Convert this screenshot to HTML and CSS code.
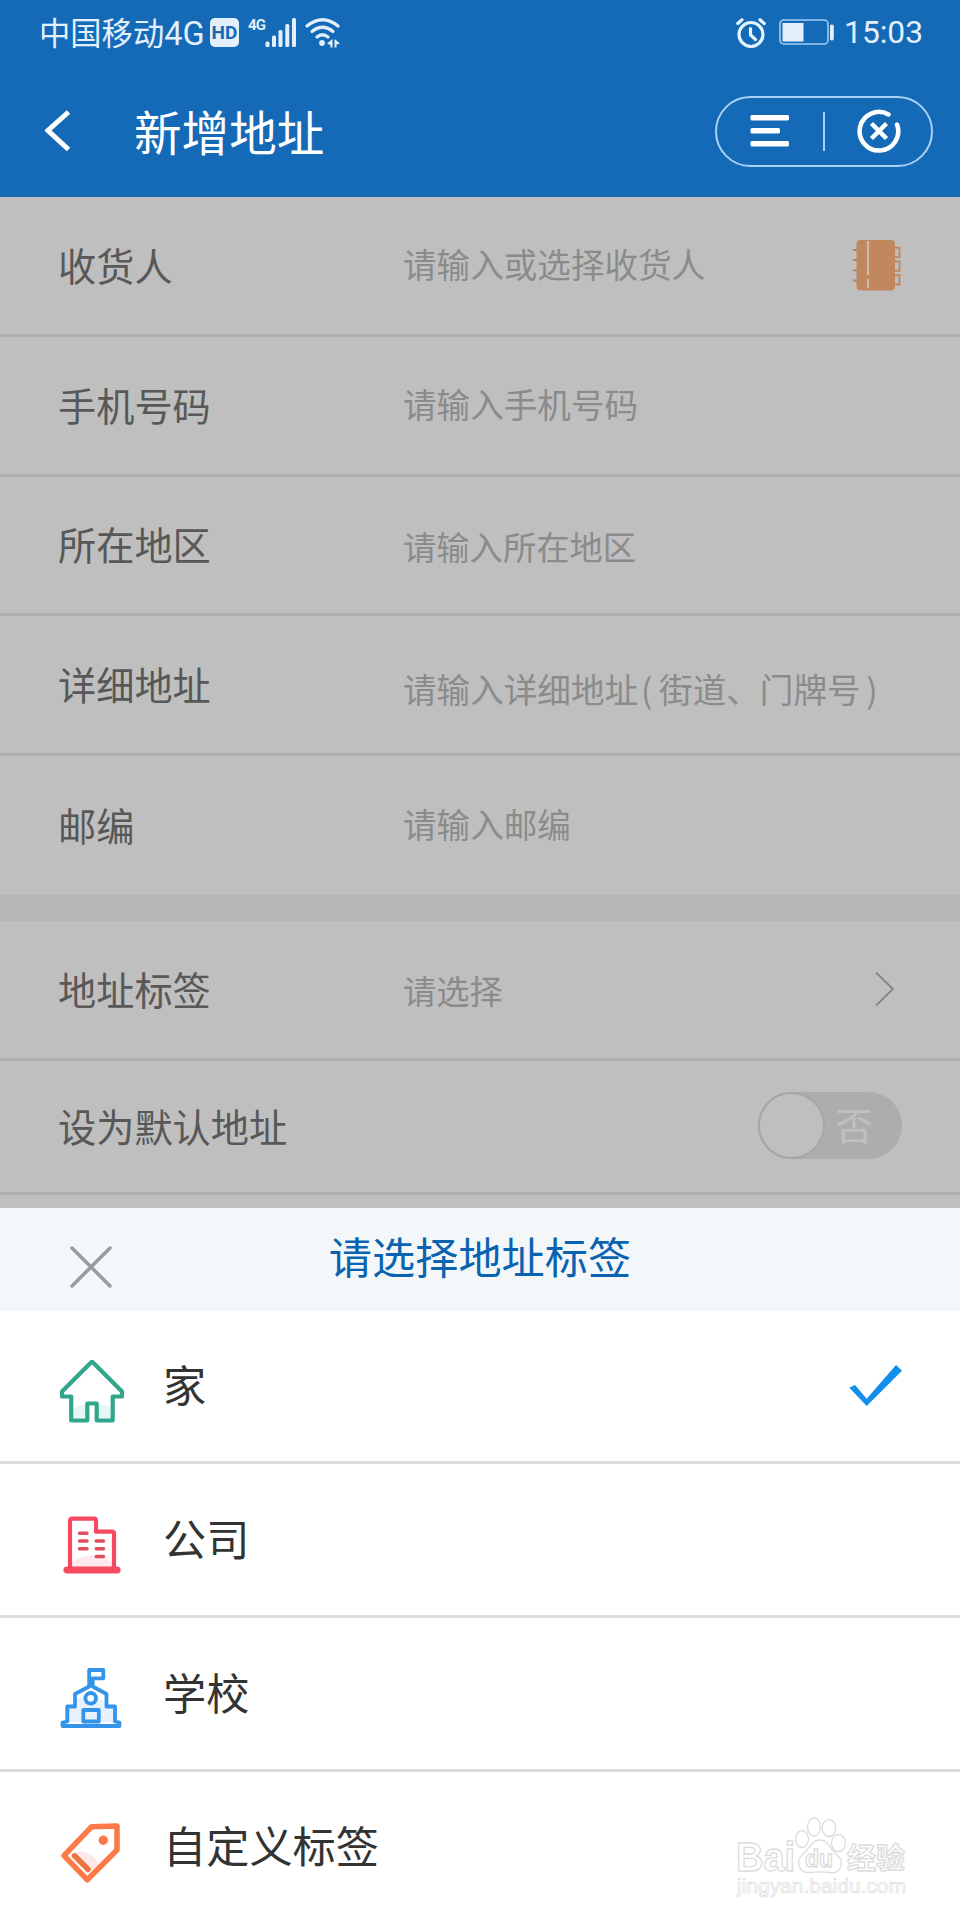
FILE: index.html
```html
<!DOCTYPE html>
<html lang="zh-CN">
<head>
    <meta charset="UTF-8">
    <meta name="viewport" content="width=device-width, initial-scale=1.0">
    <title>新增地址</title>
    <link rel="stylesheet" href="styles.css">
</head>
<body>
    <div class="screen">
        <header class="header">
            <div class="status-bar">
                <div class="status-left">
                    <span class="carrier">中国移动<span class="latin">4G</span></span>
                    <span class="hd">HD</span>
                    <span class="net">4G</span>
                    <svg class="signal" width="32" height="30" viewBox="0 0 32 30">
                        <rect x="0.5" y="23.5" width="4" height="5.5" rx="1.5"/>
                        <rect x="7" y="17.5" width="4" height="11.5" rx="1.5"/>
                        <rect x="13.5" y="12" width="4" height="17" rx="1.5"/>
                        <rect x="20.3" y="6" width="4" height="23" rx="1.5"/>
                        <rect x="27" y="0" width="4" height="29" rx="1.5"/>
                    </svg>
                    <svg class="wifi" width="36" height="30" viewBox="0 0 36 30">
                        <g fill="none" stroke="#e3f0fc" stroke-width="3.2" stroke-linecap="round">
                            <path d="M2 8Q17.500 -4.500 33 8"/>
                            <path d="M7 13.500Q17.500 5 28 13.500"/>
                            <path d="M12 19Q17.500 14.500 23 19"/>
                        </g>
                        <circle cx="17" cy="25" r="2.9"/>
                        <path d="M22 25.500L27.500 21V29.500H25.500V27zM29.500 21L35 25.500L31.500 26.500V29.500H29.500z"/>
                    </svg>
                </div>
                <div class="status-right">
                    <svg width="30" height="30" viewBox="0 0 30 30" fill="none" stroke="#e3f6ff" stroke-width="3.200" stroke-linecap="round" stroke-linejoin="round">
                        <circle cx="15" cy="16.500" r="12"/>
                        <path d="M14.500 10.500V17L19.500 21.500"/>
                        <path d="M1.800 5.500L6 1.800M28.200 5.500L24 1.800"/>
                    </svg>
                    <svg class="battery" width="56" height="27" viewBox="0 0 56 27">
                        <rect x="1" y="1" width="48" height="24" rx="4" fill="none" stroke="#a3cdf3" stroke-width="1.6"/>
                        <rect x="3.500" y="4" width="21" height="18.500"/>
                        <rect x="51" y="5.500" width="3.800" height="16" rx="1.800"/>
                    </svg>
                    <span class="time">15:03</span>
                </div>
            </div>
            <div class="nav">
                <svg class="back" width="26" height="42" viewBox="0 0 26 42">
                    <path d="M23.500 2L3 20.500L23.500 39.500" fill="none" stroke="#fff" stroke-width="5"/>
                </svg>
                <h1>新增地址</h1>
                <div class="capsule">
                    <svg width="40" height="34" viewBox="0 0 40 34" fill="#fff">
                        <rect x="0.500" y="1" width="38.500" height="5.600" rx="1.500"/>
                        <rect x="0.500" y="14" width="29.500" height="5.600" rx="1.500"/>
                        <rect x="0.500" y="27" width="38.500" height="5.600" rx="1.500"/>
                    </svg>
                    <span class="divider"></span>
                    <svg width="44" height="44" viewBox="0 0 44 44" fill="none" stroke="#fff" stroke-width="4.500" stroke-linecap="round">
                        <path d="M31.500 5.500A19.300 19.300 0 1 0 40 15.500"/>
                        <path d="M14.500 14.500L29.500 29.500M29.500 14.500L14.500 29.500" stroke-linecap="butt" stroke-width="4.500"/>
                    </svg>
                </div>
            </div>
        </header>

        <main class="form">
            <div class="row">
                <div class="label">收货人</div>
                <div class="hint">请输入或选择收货人</div>
                <svg class="contacts" width="50" height="54" viewBox="0 0 50 54">
                    <rect x="4.500" y="2" width="38.500" height="50.500" rx="4" fill="#c1875e"/>
                    <path d="M1 12H5M1 22H5M1 32.300H5M1 42.500H5" stroke="#b28462" stroke-width="1.800"/>
                    <path d="M16 3V37M16 41V50" stroke="#cdbba9" stroke-width="2.200"/>
                    <path d="M43 9.700H47.500V19H43M43 23.500H47.500V32.800H43M43 37.200H47.500V46.500H43" fill="none" stroke="#bd8965" stroke-width="2"/>
                </svg>
            </div>
            <div class="row">
                <div class="label">手机号码</div>
                <div class="hint">请输入手机号码</div>
            </div>
            <div class="row area">
                <div class="label">所在地区</div>
                <div class="hint">请输入所在地区</div>
            </div>
            <div class="row detail">
                <div class="label">详细地址</div>
                <div class="hint">请输入详细地址<span class="paren">(</span>街道、门牌号<span class="paren close">)</span></div>
            </div>
            <div class="row last">
                <div class="label">邮编</div>
                <div class="hint">请输入邮编</div>
            </div>
            <div class="gap"></div>
            <div class="row tag">
                <div class="label">地址标签</div>
                <div class="hint">请选择</div>
                <svg class="arrow" width="22" height="36" viewBox="0 0 22 36">
                    <path d="M2 1.500L19 18L2 34.500" fill="none" stroke="#858585" stroke-width="1.800"/>
                </svg>
            </div>
            <div class="row default">
                <div class="label">设为默认地址</div>
                <div class="switch">
                    <span class="knob"></span>
                    <span class="switch-text">否</span>
                </div>
            </div>
        </main>

        <section class="sheet">
            <div class="sheet-header">
                <svg class="close-icon" width="44" height="44" viewBox="0 0 44 44">
                    <path d="M3 3L41 41M41 3L3 41" stroke="#999b9d" stroke-width="3.500" stroke-linecap="round"/>
                </svg>
                <h2>请选择地址标签</h2>
            </div>
            <ul class="options">
                <li class="option">
                    <svg class="icon" viewBox="0 0 64 64">
                        <path d="M12 50Q20 42 27 46V61H12zM37 46Q46 42 52 50V61H37z" fill="#e6f8f4"/>
                        <path d="M32 1.500L62 31.500V36.500H52.700V60.500H36.700V43.500H27.300V60.500H11.200V36.500H2V31.500z" fill="none" stroke="#30a78b" stroke-width="4.200" stroke-linejoin="round"/>
                    </svg>
                    <span>家</span>
                    <svg class="check" width="53" height="42" viewBox="0 0 53 42">
                        <path d="M0.300 22.700L6 20L17.700 33.700L47 0L53 5.700L17.700 41z" fill="#128fec"/>
                    </svg>
                </li>
                <li class="option">
                    <svg class="icon" viewBox="0 0 64 64">
                        <path d="M12 55V49Q32 36 52 49V55z" fill="#fde7ea"/>
                        <g fill="none" stroke="#f54a60" stroke-width="4.200" stroke-linejoin="round" stroke-linecap="round">
                            <path d="M10 55V7.700Q10 5.700 12 5.700H34Q36 5.700 36 7.700V18.700H52Q54 18.700 54 20.700V55"/>
                            <rect x="5.500" y="55.500" width="53" height="3" rx="1.500"/>
                            <path d="M19.500 20.300H27M19.500 28H27M19.500 35.800H27M36.200 28H43.500M36.200 35.800H43.500M36.200 43.500H43.500" stroke="#e04f60" stroke-width="3.500"/>
                        </g>
                    </svg>
                    <span>公司</span>
                </li>
                <li class="option">
                    <svg class="icon" viewBox="0 0 64 64">
                        <path d="M8 55V40H16V32Q31 26 46 36V40H54V55z" fill="#e9f1fc"/>
                        <g fill="none" stroke="#3394ea" stroke-width="3.800" stroke-linejoin="round">
                            <path d="M29.200 3H43.300V11.300H32.700V19.500L46.500 27V39.500H55V54.500L59.500 55.500V59H2.500V55.500L7.300 54.500V39.500H15V27L29.200 19.500z"/>
                            <circle cx="30.700" cy="31.300" r="5.300" fill="#fff"/>
                            <rect x="23.300" y="43" width="15.500" height="11.500"/>
                        </g>
                    </svg>
                    <span>学校</span>
                </li>
                <li class="option">
                    <svg class="icon" viewBox="0 0 64 64">
                        <path d="M12 33Q30 28 39 44L28 54z" fill="#fde8ea"/>
                        <path d="M31.700 6.700L57 5.900V30L27.300 59.800L4 35.700z" fill="none" stroke="#fb7a47" stroke-width="5.500" stroke-linejoin="round"/>
                        <circle cx="43.300" cy="20.300" r="4.700" fill="#fb7a47"/>
                        <path d="M14.500 35.800L28 49.300" stroke="#ee7342" stroke-width="5.500" stroke-linecap="round"/>
                    </svg>
                    <span>自定义标签</span>
                </li>
            </ul>
            <svg class="watermark" width="176" height="88" viewBox="0 0 176 88" fill="#fff" stroke="#dcdcdc" stroke-width="1.300">
                <text class="wm-logo" x="1" y="55" font-size="40" textLength="59" lengthAdjust="spacingAndGlyphs">Bai</text>
                <ellipse cx="67" cy="23" rx="6.500" ry="8.500"/>
                <ellipse cx="79" cy="11" rx="6.500" ry="9"/>
                <ellipse cx="94" cy="12" rx="6.800" ry="8.500"/>
                <ellipse cx="103.500" cy="27" rx="7" ry="8.500"/>
                <path d="M85 24C76 24 76 32 68 38C60 45 64 57 74 56.500C82 55.500 88 55.500 95 56.500C106 58 110 46 102 39C94 32 93 24 85 24z"/>
                <text class="wm-logo" x="70" y="51" font-size="23" textLength="28" lengthAdjust="spacingAndGlyphs">du</text>
                <text class="wm-cjk" x="112" y="53" font-size="29">经验</text>
                <text class="wm-url" x="2" y="77" font-size="21" textLength="169" lengthAdjust="spacingAndGlyphs">jingyan.baidu.com</text>
            </svg>
        </section>
    </div>
</body>
</html>
```

FILE: styles.css
```css
* {
    box-sizing: border-box;
    margin: 0;
    padding: 0;
}

body {
    font-family: 'Noto Sans CJK SC', 'Noto Sans', sans-serif;
    background-color: #fff;
}

svg {
    display: block;
    flex-shrink: 0;
}

.screen {
    width: 960px;
    height: 1920px;
    overflow: hidden;
    display: flex;
    flex-direction: column;
}

/* header */
.header {
    height: 197px;
    flex-shrink: 0;
    background-color: #146ab7;
    color: #fff;
}

.status-bar {
    height: 65px;
    padding: 0 37px 0 39px;
    display: flex;
    justify-content: space-between;
    align-items: center;
    color: #e3f0fc;
    fill: #e3f0fc;
}

.status-left,
.status-right {
    display: flex;
    align-items: center;
}

.carrier {
    width: 171px;
    font-size: 31.3px;
    line-height: 44px;
    white-space: nowrap;
}

.latin {
    font-family: Roboto, sans-serif;
    font-size: 32.5px;
}

.hd {
    width: 29px;
    height: 29px;
    border-radius: 5px;
    background-color: #e3f0fc;
    color: #146ab7;
    font: bold 19px/29px Roboto, sans-serif;
    text-align: center;
}

.net {
    width: 17px;
    margin: 0 0 16px 9px;
    font: bold 15px/16px Roboto, sans-serif;
    letter-spacing: -0.8px;
}

.wifi {
    margin-left: 8px;
}

.battery {
    margin: 0 9px 0 13px;
}

.time {
    font: 31.7px/40px Roboto, sans-serif;
}

.nav {
    height: 132px;
    padding: 0 27px 0 45px;
    display: flex;
    align-items: center;
}

.nav h1 {
    margin-left: 63px;
    font-size: 47.6px;
    font-weight: normal;
    line-height: 70px;
}

.capsule {
    width: 218px;
    height: 71px;
    margin-left: auto;
    padding: 0 30px 0 33px;
    border: 2px solid #a9d0f5;
    border-radius: 36px;
    display: flex;
    justify-content: space-between;
    align-items: center;
}

.divider {
    width: 2px;
    height: 39px;
    background-color: #a9d0f5;
}

/* form, dimmed behind the sheet */
.form {
    height: 1011px;
    flex-shrink: 0;
    background-color: #bfbfbf;
}

.row {
    height: 140px;
    padding: 0 58px;
    border-bottom: 3px solid #aeaeae;
    display: flex;
    align-items: center;
}

.row.area {
    height: 139px;
}

.row.last {
    height: 139px;
    border-bottom: none;
}

.row.default {
    height: 134px;
}

.label {
    width: 345px;
    padding-bottom: 2px;
    font-size: 38.2px;
    line-height: 56px;
    color: #585858;
}

.hint {
    padding-bottom: 4px;
    font-size: 33.6px;
    line-height: 48px;
    color: #8b8b8b;
    white-space: nowrap;
}

.area .hint {
    padding: 1px 0 0;
    font-size: 33.3px;
}

.detail .hint {
    padding: 8px 0 0;
}

.tag .hint {
    padding: 0;
    font-size: 33.3px;
}

.paren {
    display: inline-block;
    width: 21px;
    padding-right: 4px;
    text-align: center;
}

.paren.close {
    width: 17px;
    padding-right: 0;
    text-align: right;
}

.contacts,
.arrow,
.switch {
    margin-left: auto;
    margin-bottom: 2px;
}

.arrow {
    margin-right: 6px;
}

.gap {
    height: 26px;
    background-color: #b6b6b6;
}

.switch {
    width: 144px;
    height: 67px;
    border-radius: 34px;
    background-color: #adadad;
    display: flex;
    align-items: center;
}

.knob {
    width: 67px;
    height: 67px;
    border: 2px solid #a6a6a6;
    border-radius: 50%;
    background-color: #bfbfbf;
}

.switch-text {
    margin-left: 10px;
    padding-bottom: 3px;
    font-size: 38px;
    line-height: 56px;
    color: #c0c0c0;
}

/* bottom sheet */
.sheet {
    position: relative;
    height: 712px;
    flex-shrink: 0;
    background-color: #fff;
}

.sheet-header {
    height: 103px;
    padding: 0 69px;
    display: flex;
    align-items: center;
    background-color: #f3f7fa;
}

.close-icon {
    margin-top: 15px;
}

.sheet-header h2 {
    flex: 1;
    margin-right: 44px;
    padding-bottom: 10px;
    font-size: 43.2px;
    font-weight: normal;
    line-height: 60px;
    text-align: center;
    color: #0a63b0;
}

.options {
    list-style: none;
}

.option {
    height: 154px;
    padding: 0 58px 0 60px;
    border-bottom: 3px solid #dcdcdc;
    display: flex;
    align-items: center;
    font-size: 43.2px;
    line-height: 60px;
    color: #333;
}

.option:first-child {
    height: 153px;
}

.option:last-child {
    height: 149px;
    border-bottom: none;
}

.option span {
    padding-bottom: 6px;
}

.icon {
    width: 64px;
    height: 64px;
    margin: 11px 39px 0 0;
}

.check {
    margin-left: auto;
}

.watermark {
    position: absolute;
    right: 49px;
    bottom: 16px;
}

.wm-logo {
    font-family: 'Liberation Sans', sans-serif;
    font-weight: bold;
}

.wm-cjk {
    font-weight: bold;
}

.wm-url {
    font-family: 'Liberation Sans', sans-serif;
    stroke-width: 0.7;
}
```
